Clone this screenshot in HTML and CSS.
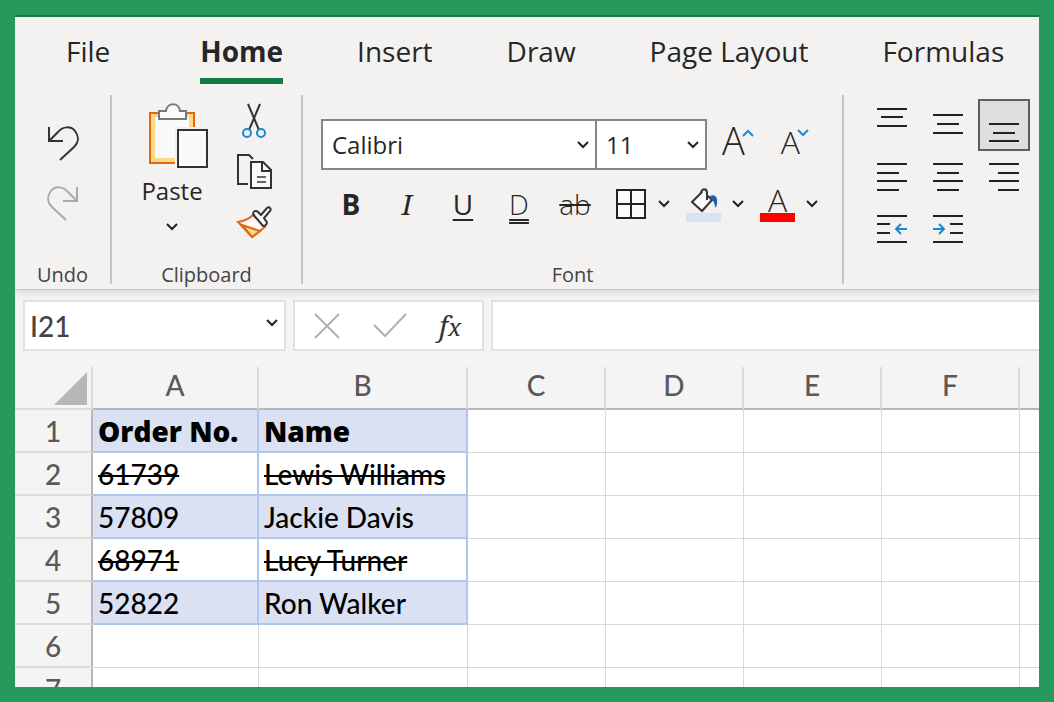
FILE: index.html
```html
<!DOCTYPE html>
<html lang="en">
<head>
  <meta charset="UTF-8">
  <meta name="viewport" content="width=device-width, initial-scale=1">
  <title>Orders</title>
  <link rel="stylesheet" href="styles.css">
</head>
<body>

  <svg class="defs" aria-hidden="true">
    <symbol id="chevron" viewBox="0 0 14 10">
      <path d="M2 2l5 5 5-5" fill="none" stroke="#222" stroke-width="2"/>
    </symbol>
  </svg>

  <div class="app">
    <header class="ribbon">
      <nav class="tabs">
        <a class="tab tab-file" href="#file">File</a>
        <a class="tab active" href="#home">Home</a>
        <a class="tab" href="#insert">Insert</a>
        <a class="tab" href="#draw">Draw</a>
        <a class="tab" href="#layout">Page Layout</a>
        <a class="tab" href="#formulas">Formulas</a>
      </nav>

      <div class="groups">
        <section class="group group-undo">
          <div class="undo-buttons">
            <button aria-label="Undo">
              <svg width="34" height="38" viewBox="0 0 34 38" fill="none" stroke="#333" stroke-width="2">
                <path d="M3 2v14h14"/>
                <path d="M3 16L12 7C17 1 25 1 29 6c4 5 4 11-1 16L14 35"/>
              </svg>
            </button>
            <button aria-label="Redo">
              <svg width="34" height="38" viewBox="0 0 34 38" fill="none" stroke="#aaa" stroke-width="2">
                <path d="M31 2v14H17"/>
                <path d="M31 16L22 7C17 1 9 1 5 6c-4 5-4 11 1 16l14 13"/>
              </svg>
            </button>
          </div>
          <h2 class="group-label">Undo</h2>
        </section>

        <section class="group group-clipboard">
          <div class="clipboard-buttons">
            <button class="paste">
              <svg width="62" height="68" viewBox="0 0 62 68" fill="none">
                <path d="M4 12h44v50H4z" fill="#fbd98b" stroke="#e0690d" stroke-width="2"/>
                <path d="M9 16h34v41H9z" fill="#fafafa"/>
                <path d="M13 18v-8h7c1-9 13-9 14 0h6v8z" fill="#fafafa" stroke="#777" stroke-width="2"/>
                <path d="M29 26h33v42H29z" fill="#f3f2f1"/>
                <path d="M32 29h29v37H32z" fill="#fafafa" stroke="#333" stroke-width="2"/>
              </svg>
              <span>Paste</span>
              <svg width="14" height="10"><use href="#chevron"/></svg>
            </button>
            <div class="clip-side">
              <button aria-label="Cut">
                <svg width="36" height="36" viewBox="0 0 36 36" fill="none" stroke-width="2">
                  <path d="M12 1l11 26M24 1L13 27" stroke="#333"/>
                  <circle cx="11" cy="30" r="4" stroke="#1c87d2"/>
                  <circle cx="25" cy="30" r="4" stroke="#1c87d2"/>
                </svg>
              </button>
              <button aria-label="Copy">
                <svg width="36" height="36" viewBox="0 0 36 36" fill="none" stroke="#333" stroke-width="2">
                  <path d="M12 30H2V1h11l4 4"/>
                  <path d="M15 8h12l8 8v18H15z" fill="#fafafa"/>
                  <path d="M26 8v9h9"/>
                  <path d="M21 23h9M21 28h9" stroke="#666"/>
                </svg>
              </button>
              <button aria-label="Format Painter">
                <svg width="36" height="36" viewBox="0 0 36 36" fill="none" stroke-width="2">
                  <path d="M2 17c6-1 11-3 15-7l12 12-13 10z" fill="#fafafa" stroke="#e0690d"/>
                  <path d="M6 20l18 6-8 6z" fill="#fbd98b" stroke="#e0690d"/>
                  <path d="M17 9c0-3 3-4 5-2l3 3 6-7c2-2 5 1 3 3l-6 7 2 3c2 2 0 5-3 5z" fill="#fafafa" stroke="#333"/>
                </svg>
              </button>
            </div>
          </div>
          <h2 class="group-label">Clipboard</h2>
        </section>

        <section class="group group-font">
          <div class="font-row">
            <div class="combo combo-font">
              <select aria-label="Font name">
                <option>Calibri</option>
              </select>
              <svg width="14" height="10"><use href="#chevron"/></svg>
            </div>
            <div class="combo combo-size">
              <select aria-label="Font size">
                <option>11</option>
              </select>
              <svg width="14" height="10"><use href="#chevron"/></svg>
            </div>
            <button class="resize grow" aria-label="Increase font size">A<svg width="12" height="8" viewBox="0 0 12 8" fill="none" stroke="#1c87d2" stroke-width="2"><path d="M1 7l5-5 5 5"/></svg></button>
            <button class="resize shrink" aria-label="Decrease font size">A<svg width="12" height="8" viewBox="0 0 12 8" fill="none" stroke="#1c87d2" stroke-width="2"><path d="M1 1l5 5 5-5"/></svg></button>
          </div>
          <div class="format-row">
            <button class="fmt bold">B</button>
            <button class="fmt italic">I</button>
            <button class="fmt"><span class="single">U</span></button>
            <button class="fmt"><span class="double">D</span></button>
            <button class="fmt"><span class="struck">ab</span></button>
            <button class="split" aria-label="Borders">
              <svg width="32" height="32" viewBox="0 0 32 32" fill="#fafafa" stroke="#222" stroke-width="2">
                <path d="M2 2h28v28H2zM16 2v28M2 16h28"/>
              </svg>
              <svg width="14" height="10"><use href="#chevron"/></svg>
            </button>
            <button class="split" aria-label="Fill colour">
              <svg width="35" height="36" viewBox="0 0 35 36" fill="none">
                <path d="M16 6L6 16l10 9 10-11-4-4" fill="#fafafa" stroke="#333" stroke-width="2"/>
                <path d="M15 7c1-5 6-5 6 0v7" stroke="#333" stroke-width="2"/>
                <path d="M24 10c6-3 9 3 6 12-2-3-1-6-4-8z" fill="#1c5fb4"/>
                <path d="M0 27h35v9H0z" fill="#d9e1f2"/>
              </svg>
              <svg width="14" height="10"><use href="#chevron"/></svg>
            </button>
            <button class="split" aria-label="Font colour">
              <span class="font-color">A</span>
              <svg width="14" height="10"><use href="#chevron"/></svg>
            </button>
          </div>
          <h2 class="group-label">Font</h2>
        </section>

        <section class="group group-align">
          <div class="align-grid">
            <button aria-label="Top align">
              <svg viewBox="0 0 52 52"><path d="M11 10h30M15 18h22M11 27h30"/></svg>
            </button>
            <button aria-label="Middle align">
              <svg viewBox="0 0 52 52"><path d="M11 16h30M15 25h22M11 34h30"/></svg>
            </button>
            <button class="selected" aria-label="Bottom align">
              <svg viewBox="0 0 52 52"><path d="M11 25h30M15 34h22M11 42h30"/></svg>
            </button>
            <button aria-label="Align left">
              <svg viewBox="0 0 52 52"><path d="M11 13h30M11 22h22M11 30h30M11 39h22"/></svg>
            </button>
            <button aria-label="Center">
              <svg viewBox="0 0 52 52"><path d="M11 13h30M15 22h22M11 30h30M15 39h22"/></svg>
            </button>
            <button aria-label="Align right">
              <svg viewBox="0 0 52 52"><path d="M11 13h30M20 22h21M11 30h30M20 39h21"/></svg>
            </button>
            <button aria-label="Decrease indent">
              <svg viewBox="0 0 52 52"><path d="M11 13h30M11 21h13M11 30h13M11 39h30"/><path class="arrow" d="M41 26H30M35 21l-5 5 5 5"/></svg>
            </button>
            <button aria-label="Increase indent">
              <svg viewBox="0 0 52 52"><path d="M11 13h30M28 21h13M28 30h13M11 39h30"/><path class="arrow" d="M11 26h11M17 21l5 5-5 5"/></svg>
            </button>
          </div>
        </section>
      </div>
    </header>

    <div class="formula-bar">
      <div class="name-box">
        <input type="text" value="I21" aria-label="Name box">
        <button aria-label="Show names"><svg width="14" height="10"><use href="#chevron"/></svg></button>
      </div>
      <div class="formula-buttons">
        <button aria-label="Cancel">
          <svg width="28" height="28" viewBox="0 0 28 28"><path d="M2 2l24 24M26 2L2 26"/></svg>
        </button>
        <button aria-label="Enter">
          <svg width="36" height="28" viewBox="0 0 36 28"><path d="M2 13l11 11L34 2"/></svg>
        </button>
        <button class="fx" aria-label="Insert function">f<span>x</span></button>
      </div>
      <input class="formula" type="text" aria-label="Formula">
    </div>

    <table class="sheet">
      <colgroup>
        <col class="col-num"><col class="col-a"><col class="col-b">
        <col class="col"><col class="col"><col class="col"><col class="col"><col>
      </colgroup>
      <thead>
        <tr>
          <th class="corner"><button aria-label="Select all"><svg width="33" height="33" viewBox="0 0 33 33"><path d="M33 0v33H0z" fill="#b7b7b7"/></svg></button></th>
          <th>A</th><th>B</th><th>C</th><th>D</th><th>E</th><th>F</th><th></th>
        </tr>
      </thead>
      <tbody>
        <tr><th>1</th><td class="data band title">Order No.</td><td class="data band title">Name</td><td></td><td></td><td></td><td></td><td></td></tr>
        <tr><th>2</th><td class="data"><s>61739</s></td><td class="data"><s>Lewis Williams</s></td><td></td><td></td><td></td><td></td><td></td></tr>
        <tr><th>3</th><td class="data band">57809</td><td class="data band">Jackie Davis</td><td></td><td></td><td></td><td></td><td></td></tr>
        <tr><th>4</th><td class="data"><s>68971</s></td><td class="data"><s>Lucy Turner</s></td><td></td><td></td><td></td><td></td><td></td></tr>
        <tr><th>5</th><td class="data band">52822</td><td class="data band">Ron Walker</td><td></td><td></td><td></td><td></td><td></td></tr>
        <tr><th>6</th><td></td><td></td><td></td><td></td><td></td><td></td><td></td></tr>
        <tr><th>7</th><td></td><td></td><td></td><td></td><td></td><td></td><td></td></tr>
      </tbody>
    </table>
  </div>

</body>
</html>
```
FILE: styles.css
```css
* {
  box-sizing: border-box;
}
body {
  margin: 0;
  padding: 15px;
  height: 100vh;
  background: #26995b;
  font-family: "Open Sans", "Noto Sans", sans-serif;
  color: #262626;
}
button, input, select {
  margin: 0;
  padding: 0;
  border: 0;
  background: none;
  font: inherit;
  color: inherit;
}
svg {
  display: block;
}
.defs {
  display: none;
}
.app {
  height: 100%;
  overflow: hidden;
  background: #f4f4f4;
}

/* ribbon */
.ribbon {
  border-top: 2px solid #0f7f41;
  border-bottom: 1px solid #c8c8c8;
  background: #f3f2f1;
  box-shadow: 0 2px 8px rgba(0, 0, 0, 0.14);
}
.tabs {
  display: flex;
  gap: 74px;
  height: 78px;
  padding: 14px 0 0 51px;
}
.tab {
  height: 53px;
  font-size: 28px;
  line-height: 40px;
  color: #262626;
  text-decoration: none;
  white-space: nowrap;
}
.tab-file {
  margin-right: 16px;
}
.tab.active {
  border-bottom: 6px solid #107c41;
  font-weight: 700;
}
.groups {
  display: flex;
  height: 194px;
  padding-bottom: 5px;
}
.group {
  display: flex;
  flex-direction: column;
  border-right: 2px solid #c8c6c4;
}
.group-label {
  margin: auto 0 0;
  font-size: 20px;
  font-weight: normal;
  line-height: 18px;
  color: #444;
  text-align: center;
}
.group-undo {
  width: 97px;
}
.undo-buttons {
  display: grid;
  gap: 22px;
  justify-content: center;
  padding-top: 30px;
}
.group-clipboard {
  width: 191px;
}
.clipboard-buttons {
  display: flex;
  gap: 28px;
  padding: 6px 0 0 24px;
}
.paste {
  display: flex;
  flex-direction: column;
  align-items: center;
  font-size: 24px;
  line-height: 32px;
}
.paste span {
  margin: 6px 0 15px;
}
.paste svg:first-child {
  margin-left: 10px;
}
.clip-side {
  display: grid;
  gap: 15px;
  align-content: start;
  padding-top: 2px;
}
.group-font {
  width: 541px;
}
.font-row {
  display: flex;
  padding: 24px 0 0 18px;
}
.combo {
  display: grid;
  align-items: center;
  height: 51px;
  border: 2px solid #858585;
  background: #fff;
}
.combo select, .combo svg {
  grid-area: 1 / 1;
}
.combo select {
  width: 100%;
  height: 47px;
  padding-left: 9px;
  appearance: none;
  font-size: 24px;
}
.combo svg {
  justify-self: end;
  margin-right: 5px;
  pointer-events: none;
}
.combo-font {
  width: 276px;
}
.combo-size {
  width: 110px;
  border-left: 0;
}
.resize {
  display: flex;
  align-items: flex-start;
  height: 42px;
  font-weight: 300;
  line-height: 42px;
}
.resize svg {
  margin: 10px 0 0 -3px;
}
.grow {
  margin-left: 15px;
  font-size: 38px;
}
.shrink {
  margin-left: 27px;
  font-size: 32px;
  line-height: 46px;
}
.format-row {
  display: flex;
  align-items: center;
  height: 44px;
  margin-top: 12px;
  padding-left: 20px;
}
.fmt {
  width: 56px;
  font-size: 28px;
  line-height: 30px;
}
.bold {
  font-weight: bold;
}
.italic {
  font-family: "Noto Serif", "Liberation Serif", serif;
  font-style: italic;
}
.single {
  text-decoration: underline 2px;
  text-underline-offset: 4px;
}
.double {
  font-weight: 300;
  text-decoration: underline double 2px;
  text-underline-offset: 4px;
}
.struck {
  font-weight: 300;
  text-decoration: line-through 2px;
}
.split {
  display: flex;
  align-items: center;
  gap: 10px;
  margin-left: 15px;
}
.fmt + .split {
  margin-left: 12px;
}
.font-color {
  width: 35px;
  border-bottom: 9px solid #f00;
  font-size: 32px;
  font-weight: 300;
  line-height: 27px;
}
.group-align {
  flex: 1;
  border-right: 0;
}
.align-grid {
  display: grid;
  grid-template-columns: repeat(3, 52px);
  grid-auto-rows: 52px;
  column-gap: 4px;
  padding: 4px 0 0 22px;
}
.align-grid svg {
  width: 52px;
  height: 52px;
  fill: none;
  stroke: #222;
  stroke-width: 2;
}
.align-grid .arrow {
  stroke: #1c87d2;
}
.selected {
  background: #e1dfdd;
  outline: 2px solid #605e5c;
  outline-offset: -2px;
}

/* formula bar */
.formula-bar {
  display: flex;
  gap: 7px;
  padding: 10px 0 16px 8px;
  color: #444;
}
.name-box, .formula-buttons, .formula {
  height: 51px;
  border: 2px solid #e1e1e1;
  background: #fff;
}
.name-box {
  display: flex;
  align-items: center;
  width: 263px;
  font-family: Lato, sans-serif;
  font-size: 28px;
  font-weight: 500;
}
.name-box input {
  flex: 1;
  min-width: 0;
  padding-left: 5px;
}
.name-box button {
  padding: 0 5px 6px;
}
.formula-buttons {
  display: flex;
  align-items: center;
  gap: 31px;
  width: 191px;
  padding-left: 18px;
}
.formula-buttons path {
  fill: none;
  stroke: #b0b0b0;
  stroke-width: 2;
}
.fx {
  font-family: "Noto Serif", "Liberation Serif", serif;
  font-size: 28px;
  font-style: italic;
  line-height: 40px;
  color: #333;
}
.fx span {
  font-size: 24px;
}
.formula {
  flex: 1;
  min-width: 0;
  border-right: 0;
}

/* sheet */
.sheet {
  width: 100%;
  table-layout: fixed;
  border-collapse: separate;
  border-spacing: 0;
  font-family: Lato, sans-serif;
  font-size: 28px;
  font-weight: 500;
}
.col-num {
  width: 78px;
}
.col-a {
  width: 166px;
}
.col-b {
  width: 209px;
}
.col {
  width: 138px;
}
.sheet th {
  height: 43px;
  padding: 0;
  font-weight: 500;
  line-height: 41px;
  color: #595959;
}
.sheet thead th {
  padding-bottom: 6px;
  border-right: 2px solid #dcdcdc;
  border-bottom: 2px solid #b7b7b7;
  line-height: 34px;
}
.sheet thead .corner {
  padding: 0;
  border-bottom-color: #dcdcdc;
}
.corner button {
  display: block;
  margin: 2px 4px 0 auto;
}
.sheet tbody th {
  padding-top: 2px;
  border-right: 2px solid #b7b7b7;
  border-bottom: 2px solid #dcdcdc;
  line-height: 39px;
}
.sheet td {
  height: 43px;
  padding: 0 0 0 5px;
  border-right: 1px solid #d9d9d9;
  border-bottom: 1px solid #d9d9d9;
  background: #fff;
  line-height: 40px;
  white-space: nowrap;
}
.sheet .data {
  border-right: 2px solid #b0c6ec;
  border-bottom: 2px solid #b0c6ec;
  color: #000;
}
.sheet tr:nth-child(6) td, .sheet tr:nth-child(7) td {
  border-color: #d9d9d9;
}
.sheet tr > :last-child {
  border-right: 0;
}
.sheet .band {
  background: #d9e1f2;
}
.sheet .title {
  font-family: "Open Sans", sans-serif;
  font-weight: 800;
}
.sheet s {
  text-decoration-thickness: 2px;
}
```
